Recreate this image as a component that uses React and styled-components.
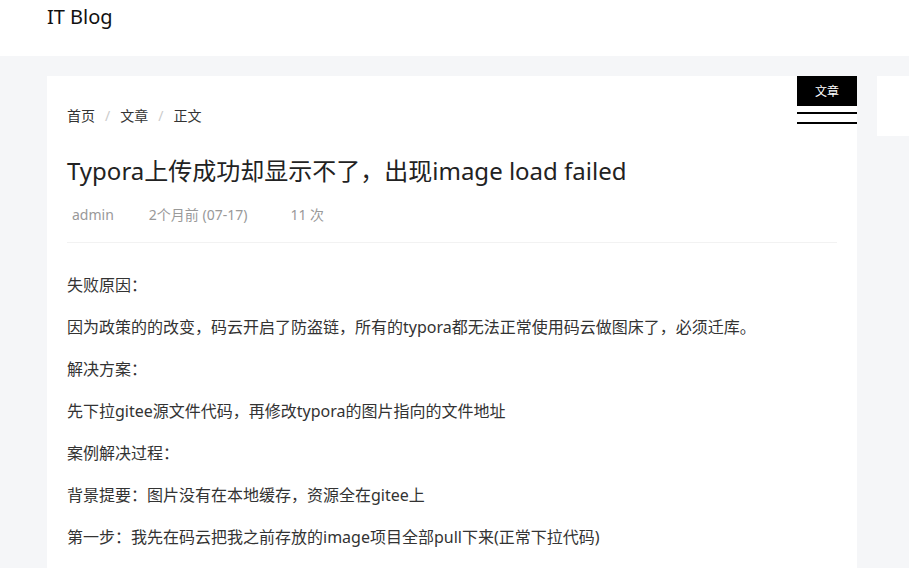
import React from "react";
import styled, { createGlobalStyle } from "styled-components";

const GlobalStyle = createGlobalStyle`
  html, body {
    margin: 0;
    padding: 0;
    overflow: hidden;
    background: #f5f6f8;
    font-family: "Noto Sans", "Noto Sans CJK SC", sans-serif;
    color: #333;
  }
`;

const Header = styled.header`
  height: 56px;
  background: #fff;
  padding: 2px 47px 0;
  box-sizing: border-box;
`;

const Brand = styled.a`
  font-size: 20px;
  line-height: 30px;
  color: #111;
  text-decoration: none;
`;

const Main = styled.div`
  display: flex;
  align-items: flex-start;
  gap: 20px;
  width: 100%;
  box-sizing: border-box;
  padding: 20px 0 0 47px;
  overflow: hidden;
`;

const Card = styled.article`
  position: relative;
  width: 810px;
  flex-shrink: 0;
  background: #fff;
  padding: 30px 20px 20px;
  box-sizing: border-box;
`;

const Side = styled.aside`
  flex: 1;
  min-width: 0;
  height: 60px;
  background: #fff;
`;

const Ribbon = styled.div`
  position: absolute;
  top: 0;
  right: 0;
  width: 60px;
  display: flex;
  flex-direction: column;
`;

const RibbonLabel = styled.div`
  height: 30px;
  background: #000;
  color: #fff;
  font-size: 12px;
  display: flex;
  align-items: center;
  justify-content: center;
`;

const RibbonRule = styled.div`
  height: 2px;
  background: #000;
  margin-top: ${(p) => p.$gap}px;
`;

const Crumbs = styled.nav`
  display: flex;
  align-items: center;
  font-size: 14px;
  line-height: 20px;
  color: #333;
`;

const Sep = styled.span`
  color: #ccc;
  padding: 0 10px;
`;

const Title = styled.h1`
  margin: 28px 0 0;
  font-size: 24px;
  font-weight: 400;
  line-height: 34px;
  color: #222;
`;

const Meta = styled.div`
  display: flex;
  gap: 25px;
  margin-top: 17px;
  padding-bottom: 17px;
  border-bottom: 1px solid #f2f2f2;
  font-size: 14px;
  line-height: 20px;
  color: #999;
`;

const MetaItem = styled.span`
  padding: 0 5px;
  margin-right: ${(p) => p.$extra || 0}px;
`;

const Body = styled.div`
  margin-top: 29px;
`;

const P = styled.p`
  margin: 0 0 16px;
  font-size: 16px;
  line-height: 26px;
  color: #333;
`;

const paragraphs = [
  "失败原因：",
  "因为政策的的改变，码云开启了防盗链，所有的typora都无法正常使用码云做图床了，必须迁库。",
  "解决方案：",
  "先下拉gitee源文件代码，再修改typora的图片指向的文件地址",
  "案例解决过程：",
  "背景提要：图片没有在本地缓存，资源全在gitee上",
  "第一步：我先在码云把我之前存放的image项目全部pull下来(正常下拉代码)",
];

export default function App() {
  return (
    <>
      <GlobalStyle />
      <Header>
        <Brand href="#">IT Blog</Brand>
      </Header>
      <Main>
        <Card>
          <Ribbon>
            <RibbonLabel>文章</RibbonLabel>
            <RibbonRule $gap={6} />
            <RibbonRule $gap={8} />
          </Ribbon>
          <Crumbs>
            <span>首页</span>
            <Sep>/</Sep>
            <span>文章</span>
            <Sep>/</Sep>
            <span>正文</span>
          </Crumbs>
          <Title>Typora上传成功却显示不了，出现image load failed</Title>
          <Meta>
            <MetaItem>admin</MetaItem>
            <MetaItem $extra={8}>2个月前 (07-17)</MetaItem>
            <MetaItem>11 次</MetaItem>
          </Meta>
          <Body>
            {paragraphs.map((t, i) => (
              <P key={i}>{t}</P>
            ))}
          </Body>
        </Card>
        <Side />
      </Main>
    </>
  );
}
